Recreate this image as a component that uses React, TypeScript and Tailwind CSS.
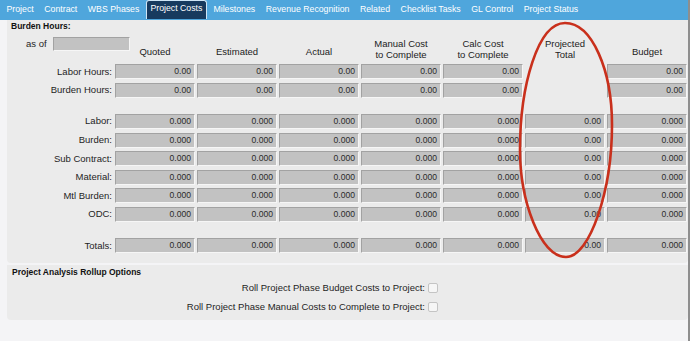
import React from 'react';

type Header = string | [string, string];

const headers: Header[] = [
  'Quoted',
  'Estimated',
  'Actual',
  ['Manual Cost', 'to Complete'],
  ['Calc Cost', 'to Complete'],
  ['Projected', 'Total'],
  'Budget',
];

const tabs = [
  'Project',
  'Contract',
  'WBS Phases',
  'Project Costs',
  'Milestones',
  'Revenue Recognition',
  'Related',
  'Checklist Tasks',
  'GL Control',
  'Project Status',
];

const hourRows = ['Labor Hours:', 'Burden Hours:'];
const costRows = ['Labor:', 'Burden:', 'Sub Contract:', 'Material:', 'Mtl Burden:', 'ODC:'];

const hourValues: (string | null)[] = ['0.00', '0.00', '0.00', '0.00', '0.00', null, '0.00'];
const costValues: (string | null)[] = ['0.000', '0.000', '0.000', '0.000', '0.000', '0.00', '0.000'];

function Field({ value }: { value: string | null }) {
  if (value === null) return <div />;
  return (
    <div className="h-[15px] bg-[#c2c2c2] border border-t-[#a2a2a2] border-l-[#a2a2a2] border-b-[#f6f6f6] border-r-[#f6f6f6] text-right pr-[3px] text-[8.6px] leading-[13px] text-[#2a2a2a]">
      {value}
    </div>
  );
}

function DataRow({ label, values }: { label: string; values: (string | null)[] }) {
  return (
    <>
      <div className="h-[15px] flex items-center justify-end pr-[1px] text-[9.5px] text-[#1e1e1e]">{label}</div>
      {values.map((v, i) => (
        <Field key={i} value={v} />
      ))}
    </>
  );
}

function Spacer() {
  return <div className="col-span-8 h-[9px]" />;
}

export default function App() {
  return (
    <div className="relative w-[690px] h-[341px] overflow-hidden flex bg-[#f4f4f6] font-['Liberation_Sans',Arial,sans-serif]">
      <div className="w-[688px] flex flex-col">
        <div className="h-[20px] flex items-stretch bg-[#4fa6dc] pl-[2.5px] gap-[2.5px] text-[8.75px] text-white">
          {tabs.map((t) =>
            t === 'Project Costs' ? (
              <div
                key={t}
                className="flex items-center px-[3.5px] pb-[2px] mb-[1px] rounded-t-[3px] border border-b-0 border-[#cfe5f5] bg-[#173a5e]"
              >
                {t}
              </div>
            ) : (
              <div key={t} className="flex items-center px-[4px] pb-[1px]">
                {t}
              </div>
            )
          )}
        </div>

        <div className="ml-[7px] bg-[#ebebeb] rounded-b-[4px] pb-[10px]">
          <div className="h-[14px] pl-[4px] text-[8.5px] font-bold leading-[12px] text-[#111]">Burden Hours:</div>
          <div className="grid grid-cols-[106px_repeat(7,80px)] gap-x-[2px] gap-y-[3.6px] mt-[2.7px]">
            <div className="h-[24px] relative">
              <div className="absolute left-[19px] top-[0px] flex items-center h-[14px] gap-[6px] whitespace-nowrap text-[9.5px] text-[#1e1e1e]">
                <span>as of</span>
                <div className="w-[77px] h-[14px] shrink-0 bg-[#c2c2c2] border border-t-[#a2a2a2] border-l-[#a2a2a2] border-b-[#f6f6f6] border-r-[#f6f6f6]" />
              </div>
            </div>
            {headers.map((h, i) => (
              <div key={i} className="h-[24px] flex flex-col justify-end items-center text-[9.5px] leading-[11.5px] text-[#222]">
                {Array.isArray(h) ? (
                  <>
                    <span>{h[0]}</span>
                    <span>{h[1]}</span>
                  </>
                ) : (
                  <span className="pb-[3px]">{h}</span>
                )}
              </div>
            ))}

            {hourRows.map((r) => (
              <DataRow key={r} label={r} values={hourValues} />
            ))}
            <Spacer />
            {costRows.map((r) => (
              <DataRow key={r} label={r} values={costValues} />
            ))}
            <Spacer />
            <DataRow label="Totals:" values={costValues} />
          </div>
        </div>

        <div className="ml-[7px] mt-[2px] bg-[#ebebeb] rounded-b-[4px] pt-[2px] pb-[3.5px]">
          <div className="pl-[5px] text-[8.5px] font-bold leading-[11.5px] text-[#111]">Project Analysis Rollup Options</div>
          {['Roll Project Phase Budget Costs to Project:', 'Roll Project Phase Manual Costs to Complete to Project:'].map((l) => (
            <div key={l} className="h-[19px] flex items-center">
              <div className="w-[418px] text-right text-[9.5px] text-[#1e1e1e]">{l}</div>
              <div className="ml-[3px] w-[10px] h-[10px] rounded-[2px] border border-[#c4c4c4] bg-[#f6f6f6]" />
            </div>
          ))}
        </div>
      </div>
      <div className="w-[2px] bg-[#8e8e8e]" />

      <svg className="absolute left-0 top-0 pointer-events-none" width="690" height="341" viewBox="0 0 690 341">
        <path
          d="M565 23 C 592 23, 612 70, 612 125 C 612 190, 590 257, 566 257 C 540 257, 520 200, 520 150 C 520 85, 538 23, 565 23 Z"
          fill="none"
          stroke="#c9301c"
          strokeWidth="2.6"
        />
      </svg>
    </div>
  );
}
